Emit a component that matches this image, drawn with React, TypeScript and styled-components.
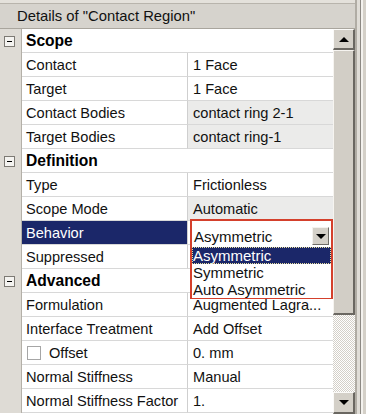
import React from "react";
import styled, { createGlobalStyle } from "styled-components";

const GlobalStyle = createGlobalStyle`
  html, body {
    margin: 0;
    padding: 0;
    background: #d4d0c8;
  }
  body {
    font-family: "Liberation Sans", Arial, sans-serif;
  }
`;

type Item =
  | { kind: "section"; title: string }
  | { kind: "prop"; name: string; value: string; shaded?: boolean; selected?: boolean; checkbox?: boolean; combo?: boolean };

// Suppressed value sits under the open list, so it is left blank
const items: Item[] = [
  { kind: "section", title: "Scope" },
  { kind: "prop", name: "Contact", value: "1 Face" },
  { kind: "prop", name: "Target", value: "1 Face" },
  { kind: "prop", name: "Contact Bodies", value: "contact ring 2-1", shaded: true },
  { kind: "prop", name: "Target Bodies", value: "contact ring-1", shaded: true },
  { kind: "section", title: "Definition" },
  { kind: "prop", name: "Type", value: "Frictionless" },
  { kind: "prop", name: "Scope Mode", value: "Automatic", shaded: true },
  { kind: "prop", name: "Behavior", value: "Asymmetric", selected: true, combo: true },
  { kind: "prop", name: "Suppressed", value: "" },
  { kind: "section", title: "Advanced" },
  { kind: "prop", name: "Formulation", value: "Augmented Lagra..." },
  { kind: "prop", name: "Interface Treatment", value: "Add Offset" },
  { kind: "prop", name: "Offset", value: "0. mm", checkbox: true },
  { kind: "prop", name: "Normal Stiffness", value: "Manual" },
  { kind: "prop", name: "Normal Stiffness Factor", value: "1." },
];

const behaviorOptions = ["Asymmetric", "Symmetric", "Auto Asymmetric"];

const App: React.FC = () => {
  return (
    <>
      <GlobalStyle />
      <Frame>
        <Main>
          <TopStrip />
          <Header>Details of "Contact Region"</Header>
          <Body>
            <Grid>
              {items.map((item, i) =>
                item.kind === "section" ? (
                  <Row key={i}>
                    <Gutter>
                      <Toggle />
                    </Gutter>
                    <SectionTitle>{item.title}</SectionTitle>
                  </Row>
                ) : (
                  <Row key={i}>
                    <Gutter />
                    <NameCell $selected={item.selected}>
                      {item.checkbox && <CheckBox />}
                      {item.name}
                    </NameCell>
                    <ValueCell $shaded={item.shaded}>
                      {item.combo ? (
                        <Dropdown>
                          <Combo>
                            <span>{item.value}</span>
                            <ComboButton>
                              <ArrowDown />
                            </ComboButton>
                          </Combo>
                          <OptionList>
                            {behaviorOptions.map((opt, j) => (
                              <Option key={opt} $active={j === 0}>
                                {opt}
                              </Option>
                            ))}
                          </OptionList>
                        </Dropdown>
                      ) : (
                        item.value
                      )}
                    </ValueCell>
                  </Row>
                )
              )}
            </Grid>
            <ScrollBar>
              <ScrollButton $h={21}>
                <ArrowUp />
              </ScrollButton>
              <Thumb />
              <Track />
              <ScrollButton $h={22}>
                <ArrowDown />
              </ScrollButton>
            </ScrollBar>
          </Body>
        </Main>
        <RightEdge />
      </Frame>
    </>
  );
};

const Frame = styled.div`
  width: 366px;
  height: 414px;
  display: flex;
  overflow: hidden;
  background: #d4d0c8;
`;

const Main = styled.div`
  width: 355px;
  display: flex;
  flex-direction: column;
`;

const TopStrip = styled.div`
  height: 3px;
  background: #e4e1db;
  border-bottom: 1px solid #b8b4ac;
`;

const Header = styled.div`
  height: 24px;
  display: flex;
  align-items: center;
  padding-left: 17px;
  background: #d6d3cd;
  border-bottom: 1px solid #a9a59d;
  font-size: 14.8px;
  color: #111;
  white-space: nowrap;
`;

const Body = styled.div`
  flex: 1;
  display: flex;
  min-height: 0;
`;

const Grid = styled.div`
  width: 333px;
  display: flex;
  flex-direction: column;
  background: #fff;
`;

const Row = styled.div`
  display: grid;
  grid-template-columns: 22px 166px 145px;
  height: 24px;
  flex-shrink: 0;
`;

const Gutter = styled.div`
  background: #dedbd5;
  border-right: 1px solid #b4b0a8;
  display: flex;
  align-items: center;
  justify-content: center;
  padding-right: 2px;
`;

const Toggle = styled.div`
  width: 9px;
  height: 9px;
  border: 1px solid #7d7a74;
  background: #f4f3f0;
  position: relative;
  &::after {
    content: "";
    position: absolute;
    left: 2px;
    top: 4px;
    width: 5px;
    height: 1px;
    background: #000;
  }
`;

const SectionTitle = styled.div`
  grid-column: 2 / 4;
  display: flex;
  align-items: center;
  padding-left: 4px;
  font-weight: bold;
  font-size: 15.6px;
  color: #000;
  border-bottom: 1px solid #d8d8d8;
  box-sizing: border-box;
`;

const NameCell = styled.div<{ $selected?: boolean }>`
  display: flex;
  align-items: center;
  padding-left: 4px;
  font-size: 14.6px;
  white-space: nowrap;
  overflow: hidden;
  box-sizing: border-box;
  border-right: 1px solid #cfcfcf;
  border-bottom: 1px solid #d8d8d8;
  background: ${(p) => (p.$selected ? "#1b2769" : "#fff")};
  color: ${(p) => (p.$selected ? "#fff" : "#111")};
`;

const ValueCell = styled.div<{ $shaded?: boolean }>`
  position: relative;
  display: flex;
  align-items: center;
  padding-left: 5px;
  font-size: 14.6px;
  white-space: nowrap;
  box-sizing: border-box;
  border-bottom: 1px solid #d8d8d8;
  background: ${(p) => (p.$shaded ? "#ebebea" : "#fff")};
  color: #111;
`;

const CheckBox = styled.span`
  width: 12px;
  height: 12px;
  border: 1px solid #a6a6a6;
  background: #fff;
  margin-left: 1px;
  margin-right: 8px;
  flex-shrink: 0;
`;

const Dropdown = styled.div`
  position: absolute;
  left: 2px;
  top: -2px;
  width: 143px;
  height: 80px;
  box-sizing: border-box;
  border: 2px solid #d4402c;
  background: #fff;
  display: flex;
  flex-direction: column;
  z-index: 2;
`;

const Combo = styled.div`
  height: 25px;
  flex-shrink: 0;
  display: flex;
  align-items: center;
  justify-content: space-between;
  padding: 5px 2px 0 2px;
  box-sizing: border-box;
  font-size: 15px;
`;

const ComboButton = styled.div`
  width: 17px;
  height: 18px;
  box-sizing: border-box;
  background: #d4d0c8;
  border-top: 1px solid #f4f2ee;
  border-left: 1px solid #f4f2ee;
  border-right: 1px solid #6f6c66;
  border-bottom: 1px solid #6f6c66;
  display: flex;
  align-items: center;
  justify-content: center;
`;

const OptionList = styled.div`
  flex: 1;
  display: flex;
  flex-direction: column;
  padding-top: 1px;
`;

const Option = styled.div<{ $active?: boolean }>`
  height: 17px;
  line-height: 17px;
  padding-left: 1px;
  font-size: 15px;
  box-sizing: border-box;
  background: ${(p) => (p.$active ? "#1b2769" : "#fff")};
  color: ${(p) => (p.$active ? "#fff" : "#111")};
  outline: ${(p) => (p.$active ? "1px dotted #e8e0a0" : "none")};
  outline-offset: -1px;
`;

const ScrollBar = styled.div`
  width: 22px;
  display: flex;
  flex-direction: column;
  background: #d4d0c8;
`;

const ScrollButton = styled.div<{ $h: number }>`
  height: ${(p) => p.$h}px;
  flex-shrink: 0;
  box-sizing: border-box;
  background: #d4d0c8;
  border-top: 1px solid #fbfaf8;
  border-left: 1px solid #fbfaf8;
  border-right: 2px solid #6a6761;
  border-bottom: 2px solid #6a6761;
  display: flex;
  align-items: center;
  justify-content: center;
`;

const Thumb = styled.div`
  height: 265px;
  flex-shrink: 0;
  box-sizing: border-box;
  background: #d2cec6;
  border-top: 1px solid #f6f4f0;
  border-left: 1px solid #f6f4f0;
  border-right: 2px solid #6a6761;
  border-bottom: 2px solid #6a6761;
`;

const Track = styled.div`
  flex: 1;
  background: repeating-conic-gradient(#ffffff 0 25%, #d4d0c8 0 50%) 0 0 / 2px 2px;
`;

const ArrowUp = styled.span`
  width: 0;
  height: 0;
  border-left: 5px solid transparent;
  border-right: 5px solid transparent;
  border-bottom: 5px solid #000;
`;

const ArrowDown = styled.span`
  width: 0;
  height: 0;
  border-left: 5px solid transparent;
  border-right: 5px solid transparent;
  border-top: 5px solid #000;
`;

const RightEdge = styled.div`
  flex: 1;
  background: #d4d0c8;
  border-left: 2px solid #b0aca4;
  box-shadow: inset 3px 0 0 #e0ddd7, inset 4px 0 0 #8c8983, inset 6px 0 0 #f4f2ee;
`;

export default App;
